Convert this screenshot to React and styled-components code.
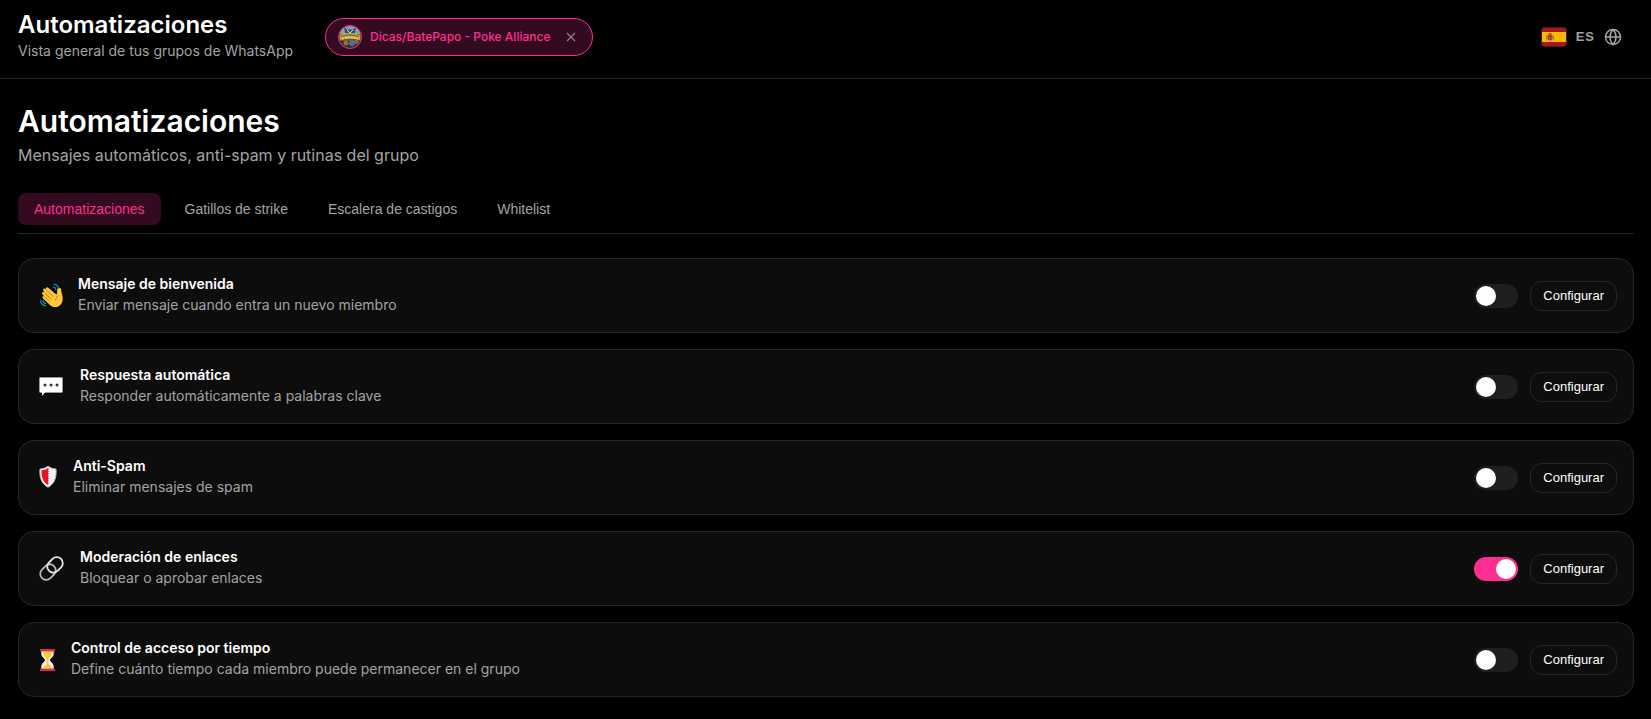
import React, { useState } from 'react'
import styled, { createGlobalStyle } from 'styled-components'
import { Globe } from 'lucide-react'

const GlobalStyle = createGlobalStyle`
	* {
		box-sizing: border-box;
	}

	body {
		margin: 0;
		background: #000;
		color: #fff;
		font-family: Inter, "Liberation Sans", sans-serif;
	}

	h1, h2, h3, p {
		margin: 0;
	}

	button {
		font-family: "Liberation Sans", Arial, sans-serif;
		cursor: pointer;
	}
`

const Header = styled.header`
	display: flex;
	align-items: flex-start;
	justify-content: space-between;
	padding: 10px 29px 16px 18px;
	border-bottom: 1px solid #262626;
`

const HeaderLeft = styled.div`
	display: flex;
	align-items: flex-start;
	gap: 32px;
`

const HeaderTitle = styled.h1`
	font-size: 24px;
	line-height: 30px;
	font-weight: 600;
`

const HeaderSubtitle = styled.p`
	font-size: 14px;
	line-height: 22px;
	color: #a3a3a3;
`

const GroupChip = styled.div`
	display: flex;
	align-items: center;
	height: 38px;
	margin-top: 8px;
	padding: 0 14px 0 12px;
	border: 1px solid #ff2e93;
	border-radius: 19px;
	background: #330a1f;
`

const ChipName = styled.span`
	margin-left: 8px;
	font-size: 12px;
	line-height: 16px;
	font-weight: 500;
	color: #ff2e93;
`

const ChipClose = styled.button`
	display: flex;
	margin-left: 14px;
	padding: 2px;
	border: 0;
	background: none;
	color: #94818b;
`

const Language = styled.button`
	display: flex;
	align-items: center;
	gap: 9px;
	margin-top: 16px;
	padding: 0;
	border: 0;
	background: none;
	color: #a3a3a3;
	font-size: 13px;
	line-height: 22px;
	font-weight: 700;
	letter-spacing: 1px;
`

const Main = styled.main`
	padding: 24px 17px 20px 18px;
`

const PageTitle = styled.h2`
	font-size: 30px;
	line-height: 36px;
	font-weight: 600;
`

const PageSubtitle = styled.p`
	margin-top: 4px;
	font-size: 16px;
	line-height: 24px;
	color: #a3a3a3;
`

const Tabs = styled.nav`
	display: flex;
	gap: 8px;
	margin: 26px 0 24px;
	padding-bottom: 8px;
	border-bottom: 1px solid #262626;
`

const Tab = styled.button`
	padding: 8px 16px;
	border: 0;
	border-radius: 8px;
	background: ${({ $active }) => ($active ? '#330a1f' : 'transparent')};
	color: ${({ $active }) => ($active ? '#ff2e93' : '#a3a3a3')};
	font-size: 14px;
	line-height: 16px;
`

const CardList = styled.div`
	display: flex;
	flex-direction: column;
	gap: 16px;
`

const Card = styled.section`
	display: flex;
	align-items: center;
	gap: 12px;
	padding: 16px 16px 16px 20px;
	border: 1px solid #262626;
	border-radius: 16px;
	background: #0d0d0d;
`

const CardText = styled.div`
	flex: 1;
	margin-left: 2px;
`

const CardTitle = styled.h3`
	font-size: 14px;
	line-height: 17px;
	font-weight: 600;
`

const CardDescription = styled.p`
	margin-top: 2px;
	font-size: 14px;
	line-height: 22px;
	color: #a3a3a3;
`

const Switch = styled.input`
	appearance: none;
	display: flex;
	align-items: center;
	width: 44px;
	height: 24px;
	margin: 0;
	padding: 0 2px;
	border-radius: 12px;
	background: #1f1f1f;
	cursor: pointer;

	&::before {
		content: "";
		width: 20px;
		height: 20px;
		border-radius: 50%;
		background: #fff;
	}

	&:checked {
		justify-content: flex-end;
		background: #ff2e93;
	}
`

const ConfigureButton = styled.button`
	padding: 6px 12px;
	border: 1px solid #262626;
	border-radius: 12px;
	background: #0d0d0d;
	color: #fff;
	font-size: 13px;
	line-height: 16px;
`

const WaveIcon = () => (
	<svg width="25" height="28" viewBox="-1 0 25 28" aria-hidden="true">
		<path
			d="M2.3 12.1c-1-1.2.7-2.7 1.8-1.6L3.4 8.6C2.5 7.2 4.4 5.8 5.5 7l.5.6C5.200 6 7.200 4.500 8.500 5.900L14.900 11.600l1.800.9c.6-.6.3-3.200.6-5.400.3-1.800 2.700-2 3.500-.3.600 1.300.400 2.800 1.100 5.200 1.200 3.600 1.200 7.100-.7 10-2.400 3.600-7.300 4.100-10.700 1.400L3 16.500c-1.300-1.200 0-2.800 1-2.300z"
			fill="#ffc83d"
		/>
		<path d="M4 10.500l7.200 6.700M6 7.600l7.300 6.900M4 14.200l5.300 5M15.600 18.300c.2-2.800 1.600-4.300 3-5" fill="none" stroke="#d67d00" strokeWidth=".9" strokeLinecap="round" />
		<path d="M14 2.300c2.600.1 4.100 1.600 4.300 4M13 5c1.500 0 2.500.9 2.700 2.300M.7 18.300c-.2 2.900 1.800 5.200 4.800 5.400M3 18.600c0 1.600 1.100 2.700 2.700 2.900" fill="none" stroke="#0c8eaa" strokeWidth="1.200" strokeLinecap="round" />
	</svg>
)

const BubbleIcon = () => (
	<svg width="27" height="28" viewBox="1 1 27 28" aria-hidden="true">
		<path d="M2 5h22q1 0 1 1v14q0 1-1 1H7l-3.500 4V21H2q-1 0-1-1V6q0-1 1-1z" fill="#fff" stroke="#000" strokeWidth=".8" />
		<circle cx="7" cy="13" r="1.500" fill="#333" />
		<circle cx="13" cy="13" r="1.500" fill="#333" />
		<circle cx="19" cy="13" r="1.500" fill="#333" />
	</svg>
)

const ShieldIcon = () => (
	<svg width="20" height="28" viewBox="0 1 20 28" aria-hidden="true">
		<path d="M9 3.200c2.500 1.800 5 2.600 8 2.800.600 8-1 14.500-8 18.300C2 20.500.400 14 1 6c3-.2 5.500-1 8-2.800z" fill="#f2f2f2" stroke="#b9b9b9" strokeWidth="1" />
		<path d="M9 5.200v16.900C3.800 19 2.300 14 2.600 7.300 5 7 7 6.400 9 5.200z" fill="#e81224" />
		<path d="M9 5.500v16" stroke="#e81224" strokeWidth="1.600" strokeDasharray="1.200 1.200" />
	</svg>
)

const LinkIcon = () => (
	<svg width="27" height="28" viewBox="0 0 27 28" aria-hidden="true" fill="none">
		<g transform="rotate(-45 12.500 13.500)">
			<rect x="-1" y="7.500" width="17" height="12" rx="6" stroke="#b8b8b8" strokeWidth="1.800" />
			<rect x="9" y="7.500" width="17" height="12" rx="6" stroke="#e6e6e6" strokeWidth="1.800" />
		</g>
	</svg>
)

const HourglassIcon = () => (
	<svg width="18" height="28" viewBox="0 0 18 28" aria-hidden="true">
		<path d="M2.300 4h12.400v4c0 3-3.700 4.300-3.700 6s3.700 3.500 3.700 6.500V24H2.300v-3.500c0-3 3.700-4.800 3.700-6.500S2.300 11 2.300 8z" fill="#f3f3f3" />
		<path d="M4 6h9v2c0 2.500-3.600 4-3.600 6v4.500c1.600.700 2.900 1.800 3.600 3.500H4c.7-1.700 2-2.800 3.600-3.500V14C7.600 12 4 10.500 4 8z" fill="#ffc83d" />
		<rect x="1" y="3" width="15" height="2.500" rx=".5" fill="#d13438" />
		<rect x="1" y="22.500" width="15" height="2.500" rx=".5" fill="#d13438" />
	</svg>
)

const FlagIcon = () => (
	<svg width="26" height="20" viewBox="0 0 26 20" aria-hidden="true">
		<clipPath id="flag">
			<rect x=".5" y=".5" width="25" height="19" rx="3" />
		</clipPath>
		<g clipPath="url(#flag)">
			<rect width="26" height="20" fill="#aa151b" />
			<rect y="5" width="26" height="10" fill="#f9b900" />
		</g>
		<path d="M6.500 8h5v3.500q0 2-2.500 2t-2.500-2z" fill="#b23a2a" />
		<path d="M5.500 8.500v5M12.500 8.500v5" stroke="#a87a55" />
		<path d="M7.500 7h3" stroke="#a3301e" strokeWidth="1.400" />
		<circle cx="9" cy="11" r="1" fill="#5e79a8" />
		<rect x=".5" y=".5" width="25" height="19" rx="3" fill="none" stroke="#3d2224" />
	</svg>
)

const GroupAvatar = () => (
	<svg width="24" height="24" viewBox="0 0 24 24" aria-hidden="true">
		<clipPath id="avatar">
			<circle cx="12" cy="12" r="11" />
		</clipPath>
		<g clipPath="url(#avatar)">
			<rect width="24" height="24" fill="#6b5636" />
			<rect width="24" height="9" fill="#8da3a0" />
			<path d="M6 2l4 3 2-1 2 1 4-3-1 6-5 2-5-2z" fill="#34517c" />
			<path d="M9 5l3 3 3-3" fill="none" stroke="#d8dfdf" />
			<path d="M2 10q10-4 20 0v5q-10-3-20 0z" fill="#d8a93a" />
			<path d="M3 11.500q9-3 18 0" fill="none" stroke="#557f37" strokeWidth="1.500" />
			<path d="M4 14q8-2.500 16 0" fill="none" stroke="#f0d795" strokeWidth="1.200" strokeDasharray="2 1" />
			<rect y="16" width="24" height="8" fill="#29323b" />
			<circle cx="8" cy="18" r="2.500" fill="#a6673b" />
			<circle cx="14" cy="18" r="3" fill="#4f7294" />
			<circle cx="18.500" cy="17" r="2" fill="#8a6c3c" />
		</g>
		<circle cx="12" cy="12" r="11.500" fill="none" stroke="#ff2e93" />
	</svg>
)

const CloseIcon = () => (
	<svg width="10" height="10" viewBox="0 0 10 10" aria-hidden="true">
		<path d="M1 1l8 8M9 1l-8 8" stroke="currentColor" strokeWidth="1.200" />
	</svg>
)

const tabs = ['Automatizaciones', 'Gatillos de strike', 'Escalera de castigos', 'Whitelist']

const automations = [
	{ id: 'welcome', icon: WaveIcon, title: 'Mensaje de bienvenida', description: 'Enviar mensaje cuando entra un nuevo miembro' },
	{ id: 'reply', icon: BubbleIcon, title: 'Respuesta automática', description: 'Responder automáticamente a palabras clave' },
	{ id: 'spam', icon: ShieldIcon, title: 'Anti-Spam', description: 'Eliminar mensajes de spam' },
	{ id: 'links', icon: LinkIcon, title: 'Moderación de enlaces', description: 'Bloquear o aprobar enlaces', enabled: true },
	{ id: 'access', icon: HourglassIcon, title: 'Control de acceso por tiempo', description: 'Define cuánto tiempo cada miembro puede permanecer en el grupo' }
]

const AutomationCard = ({ id, icon: Icon, title, description, enabled = false }) => (
	<Card>
		<Icon />
		<CardText>
			<CardTitle id={id}>{title}</CardTitle>
			<CardDescription>{description}</CardDescription>
		</CardText>
		<Switch type="checkbox" role="switch" aria-labelledby={id} defaultChecked={enabled} />
		<ConfigureButton type="button">Configurar</ConfigureButton>
	</Card>
)

const App = () => {
	const [active, setActive] = useState(tabs[0])

	return (
		<>
			<GlobalStyle />
			<Header>
				<HeaderLeft>
					<div>
						<HeaderTitle>Automatizaciones</HeaderTitle>
						<HeaderSubtitle>Vista general de tus grupos de WhatsApp</HeaderSubtitle>
					</div>
					<GroupChip>
						<GroupAvatar />
						<ChipName>Dicas/BatePapo - Poke Alliance</ChipName>
						<ChipClose type="button" aria-label="Quitar grupo">
							<CloseIcon />
						</ChipClose>
					</GroupChip>
				</HeaderLeft>
				<Language type="button">
					<FlagIcon />
					<span>ES</span>
					<Globe size={18} />
				</Language>
			</Header>
			<Main>
				<PageTitle>Automatizaciones</PageTitle>
				<PageSubtitle>Mensajes automáticos, anti-spam y rutinas del grupo</PageSubtitle>
				<Tabs>
					{tabs.map(tab => (
						<Tab key={tab} type="button" $active={tab === active} onClick={() => setActive(tab)}>
							{tab}
						</Tab>
					))}
				</Tabs>
				<CardList>
					{automations.map(item => (
						<AutomationCard key={item.id} {...item} />
					))}
				</CardList>
			</Main>
		</>
	)
}

export default App
